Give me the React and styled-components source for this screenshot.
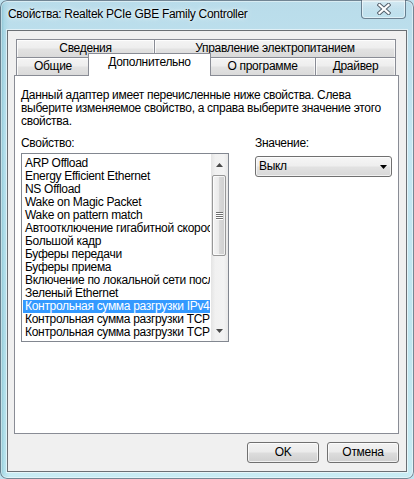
import React from 'react';
import styled, { createGlobalStyle } from 'styled-components';

const Global = createGlobalStyle`
  html, body { margin: 0; padding: 0; width: 414px; height: 479px; overflow: hidden; background: #bfe2ef; }
  body { font-family: "Liberation Sans", Arial, sans-serif; font-size: 12px; letter-spacing: -0.3px; color: #000; }
  * { box-sizing: border-box; }
`;

const Frame = styled.div`
  width: 414px;
  height: 479px;
  display: flex;
  flex-direction: column;
  border-radius: 7px;
  background:
    linear-gradient(to right, rgba(70,150,170,0.55) 0px, rgba(140,205,220,0.35) 4px, rgba(255,255,255,0) 9px),
    linear-gradient(to bottom, #b9dcea 0%, #c5e7f3 30%, #bfe5ef 70%, #c8ecf4 100%);
  box-shadow: inset 0 0 0 1px rgba(30, 50, 70, 0.55), inset 0 0 0 2px rgba(255,255,255,0.45);
`;

const TitleBar = styled.div`
  height: 30px;
  display: flex;
  align-items: flex-start;
  padding: 0 8px;
`;

const TitleText = styled.div`
  margin-top: 8px;
  line-height: 13px;
  font-size: 12px;
  color: #000;
  white-space: nowrap;
  text-shadow: 0 0 6px #e8f8ff, 0 0 3px #ffffff;
`;

const CloseButton = styled.div`
  margin-left: auto;
  width: 45px;
  height: 19px;
  display: flex;
  align-items: center;
  justify-content: center;
  border: 1px solid rgba(40, 60, 80, 0.6);
  border-top: none;
  border-radius: 0 0 4px 4px;
  background: linear-gradient(to bottom, rgba(255,255,255,0.4), rgba(255,255,255,0.15) 50%, rgba(200,235,245,0.3));
  box-shadow: inset 0 0 0 1px rgba(255,255,255,0.5);
`;

const Client = styled.div`
  flex: 1;
  margin: 0 7px 7px 7px;
  border: 1px solid #6a6f74;
  background: #f0f0f0;
  box-shadow: 0 0 0 1px rgba(255,255,255,0.55);
  padding: 8px 7px 8px 6px;
  display: flex;
  flex-direction: column;
`;

const TabRow = styled.div`
  display: flex;
  align-items: flex-start;
  height: 18px;
  padding: 0 2px;
`;

const Tab = styled.div`
  position: relative;
  width: ${p => p.$w}px;
  height: ${p => (p.$active ? 23 : 18)}px;
  margin-left: ${p => (p.$active ? -2 : p.$overlap ? -1 : 0)}px;
  margin-right: ${p => (p.$active ? -2 : 0)}px;
  margin-top: ${p => (p.$active ? -4 : 0)}px;
  z-index: ${p => (p.$active ? 2 : 1)};
  border: 1px solid #898c95;
  border-bottom: none;
  display: flex;
  justify-content: center;
  align-items: ${p => (p.$active ? 'flex-start' : 'center')};
  padding-top: ${p => (p.$active ? 2 : 0)}px;
  line-height: 13px;
  white-space: nowrap;
  background: ${p => (p.$active
    ? '#ffffff'
    : 'linear-gradient(to bottom, #f4f4f4 0%, #eeeeee 45%, #e2e2e2 55%, #dadada 100%)')};
  box-shadow: ${p => (p.$active ? 'none' : 'inset 1px 1px 0 rgba(255,255,255,0.8), inset -1px 0 0 rgba(255,255,255,0.6)')};
`;

const Panel = styled.div`
  height: 359px;
  background: #ffffff;
  border: 1px solid #898c95;
  padding: 13px 5px 0 6px;
  display: flex;
  flex-direction: column;
`;

const Description = styled.p`
  margin: 0;
  line-height: 13px;
  white-space: nowrap;
`;

const Grid = styled.div`
  margin-top: 9px;
  display: grid;
  grid-template-columns: 208px 137px;
  column-gap: 26px;
  row-gap: 3px;
  align-items: start;
`;

const Label = styled.div`
  line-height: 13px;
`;

const ListBox = styled.div`
  width: 208px;
  height: 189px;
  border: 1px solid #828790;
  background: #fff;
  display: flex;
`;

const Items = styled.div`
  flex: 1;
  min-width: 0;
  padding-top: 3px;
  overflow: hidden;
`;

const Item = styled.div`
  height: 13px;
  line-height: 13px;
  margin: 0 1px 0 1px;
  padding-left: 2px;
  white-space: nowrap;
  overflow: hidden;
  background: ${p => (p.$selected ? '#3399ff' : 'transparent')};
  color: ${p => (p.$selected ? '#ffffff' : '#000000')};
`;

const ScrollBar = styled.div`
  width: 17px;
  display: flex;
  flex-direction: column;
  background: linear-gradient(to right, #e4e4e4 0%, #f1f1f1 25%, #f3f3f3 75%, #e8e8e8 100%);
`;

const ArrowButton = styled.div`
  height: 17px;
  display: flex;
  justify-content: center;
  align-items: ${p => (p.$down ? 'flex-start' : 'flex-end')};
  padding: ${p => (p.$down ? '5px 1px 0 0' : '0 1px 4px 0')};
`;

const Track = styled.div`
  flex: 1;
  display: flex;
  flex-direction: column;
`;

const Thumb = styled.div`
  margin: 4px 2px 0 1px;
  height: 81px;
  border: 1px solid #979797;
  border-radius: 2px;
  background: linear-gradient(to right, #f4f4f4 0%, #eaeaea 50%, #d9d9d9 51%, #cfcfcf 100%);
  box-shadow: inset 0 0 0 1px rgba(255,255,255,0.7);
  display: flex;
  align-items: center;
  justify-content: center;
`;

const Grip = styled.div`
  width: 7px;
  display: flex;
  flex-direction: column;
  gap: 1px;
`;

const GripLine = styled.div`
  height: 1px;
  background: #6f6f6f;
  box-shadow: 0 1px 0 #ffffff;
`;

const Combo = styled.div`
  margin-top: 3px;
  height: 21px;
  border: 1px solid #707070;
  border-radius: 3px;
  background: linear-gradient(to bottom, #f6f6f6 0%, #eeeeee 48%, #e2e2e2 52%, #d8d8d8 100%);
  box-shadow: inset 0 0 0 1px rgba(255,255,255,0.65);
  display: flex;
  align-items: center;
  padding: 0 4px 0 3px;
  line-height: 13px;
`;

const ComboText = styled.span`
  flex: 1;
`;

const ButtonRow = styled.div`
  margin-top: 8px;
  display: flex;
  justify-content: flex-end;
  gap: 8px;
`;

const Button = styled.div`
  width: 72px;
  height: 21px;
  border: 1px solid #707070;
  border-radius: 3px;
  background: linear-gradient(to bottom, #f2f2f2 0%, #ebebeb 48%, #dddddd 52%, #cfcfcf 100%);
  box-shadow: inset 0 0 0 1px rgba(255,255,255,0.7);
  display: flex;
  align-items: center;
  justify-content: center;
  line-height: 13px;
`;

const Triangle = ({ down, color = '#4a4a4a', w = 7, h = 4 }) => (
  <svg width={w} height={h} viewBox={`0 0 ${w} ${h}`} style={{ display: 'block' }}>
    {down
      ? <polygon points={`0,0 ${w},0 ${w / 2},${h}`} fill={color} />
      : <polygon points={`0,${h} ${w},${h} ${w / 2},0`} fill={color} />}
  </svg>
);

const CloseX = () => (
  <svg width="14" height="12" viewBox="0 0 14 12" style={{ display: 'block' }}>
    <path d="M2.5 2 L11.5 10 M11.5 2 L2.5 10" stroke="#56626e" strokeWidth="4.2" strokeLinecap="square" fill="none" />
    <path d="M2.5 2 L11.5 10 M11.5 2 L2.5 10" stroke="#ffffff" strokeWidth="2.2" strokeLinecap="square" fill="none" />
  </svg>
);

const items = [
  'ARP Offload',
  'Energy Efficient Ethernet',
  'NS Offload',
  'Wake on Magic Packet',
  'Wake on pattern match',
  'Автоотключение гигабитной скорости',
  'Большой кадр',
  'Буферы передачи',
  'Буферы приема',
  'Включение по локальной сети после отключения',
  'Зеленый Ethernet',
  'Контрольная сумма разгрузки IPv4',
  'Контрольная сумма разгрузки TCP (IPv4)',
  'Контрольная сумма разгрузки TCP (IPv6)',
];

export default function App() {
  return (
    <>
      <Global />
      <Frame>
        <TitleBar>
          <TitleText>Свойства: Realtek PCIe GBE Family Controller</TitleText>
          <CloseButton><CloseX /></CloseButton>
        </TitleBar>
        <Client>
          <TabRow>
            <Tab $w={139}>Сведения</Tab>
            <Tab $w={242} $overlap>Управление электропитанием</Tab>
          </TabRow>
          <TabRow>
            <Tab $w={74}>Общие</Tab>
            <Tab $w={123} $active>Дополнительно</Tab>
            <Tab $w={107}>О программе</Tab>
            <Tab $w={81} $overlap>Драйвер</Tab>
          </TabRow>
          <Panel>
            <Description>
              Данный адаптер имеет перечисленные ниже свойства. Слева<br />
              выберите изменяемое свойство, а справа выберите значение этого<br />
              свойства.
            </Description>
            <Grid>
              <Label>Свойство:</Label>
              <Label>Значение:</Label>
              <ListBox>
                <Items>
                  {items.map((t, i) => (
                    <Item key={t} $selected={i === 11}>{t}</Item>
                  ))}
                </Items>
                <ScrollBar>
                  <ArrowButton><Triangle /></ArrowButton>
                  <Track>
                    <Thumb>
                      <Grip>
                        <GripLine /><GripLine /><GripLine /><GripLine />
                      </Grip>
                    </Thumb>
                  </Track>
                  <ArrowButton $down><Triangle down /></ArrowButton>
                </ScrollBar>
              </ListBox>
              <Combo>
                <ComboText>Выкл</ComboText>
                <Triangle down color="#000" w={7} h={4} />
              </Combo>
            </Grid>
          </Panel>
          <ButtonRow>
            <Button>OK</Button>
            <Button>Отмена</Button>
          </ButtonRow>
        </Client>
      </Frame>
    </>
  );
}
